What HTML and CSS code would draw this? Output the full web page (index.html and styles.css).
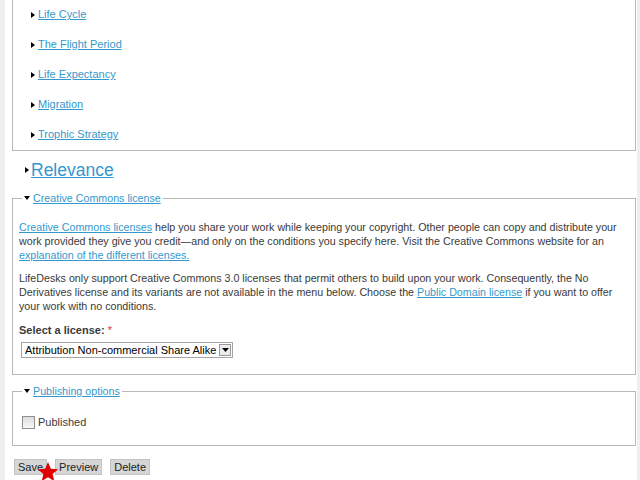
FILE: index.html
```html
<!DOCTYPE html>
<html>
<head>
  <meta charset="UTF-8">
  <title>Edit taxon page</title>
  <link rel="stylesheet" href="styles.css">
</head>
<body>
  <div class="page">
    <fieldset class="chapter-box">
      <ul class="chapter-list">
        <li><a href="#">Life Cycle</a></li>
        <li><a href="#">The Flight Period</a></li>
        <li><a href="#">Life Expectancy</a></li>
        <li><a href="#">Migration</a></li>
        <li><a href="#">Trophic Strategy</a></li>
      </ul>
    </fieldset>

    <h2 class="relevance"><a href="#">Relevance</a></h2>

    <fieldset class="group">
      <legend><span class="open-arrow"></span><a href="#">Creative Commons license</a></legend>
      <p class="first"><a href="#">Creative Commons licenses</a> help you share your work while keeping your copyright. Other people can copy and distribute your work provided they give you credit—and only on the conditions you specify here. Visit the Creative Commons website for an <a href="#">explanation of the different licenses.</a></p>
      <p>LifeDesks only support Creative Commons 3.0 licenses that permit others to build upon your work. Consequently, the No Derivatives license and its variants are not available in the menu below. Choose the <a href="#">Public Domain license</a> if you want to offer your work with no conditions.</p>
      <div class="field-label">Select a license: <span class="required">*</span></div>
      <div class="select-box">
        <span class="select-text">Attribution Non-commercial Share Alike</span>
        <span class="select-btn"><svg width="7" height="4" viewBox="0 0 7 4"><path d="M0 0h7L3.5 4z" fill="#000"/></svg></span>
      </div>
    </fieldset>

    <fieldset class="group publish">
      <legend><span class="open-arrow"></span><a href="#">Publishing options</a></legend>
      <label class="check-row"><input type="checkbox" class="check"> Published</label>
    </fieldset>

    <div class="actions">
      <button class="btn">Save</button>
      <button class="btn">Preview</button>
      <button class="btn">Delete</button>
      <svg class="star" width="22" height="22" viewBox="0 0 24 24">
        <path d="M12 1l3.1 7.4 8 .6-6.1 5.2 1.9 7.8L12 17.8 5.1 22l1.9-7.8L.9 9l8-.6z" fill="#e00000"/>
      </svg>
    </div>
  </div>
</body>
</html>
```

FILE: styles.css
```css
body {
  margin: 0;
  background-color: #efefef;
  font-family: "Liberation Sans", Arial, sans-serif;
  font-size: 10.7px;
  color: #3a3a3a;
  overflow: hidden;
}

a {
  color: #3399cc;
}

.page {
  display: flow-root;
  position: relative;
  margin-left: 5px;
  width: 632px;
  height: 480px;
  padding: 0 1px 0 7px;
  box-sizing: border-box;
  background-color: #fff;
}

fieldset {
  margin: 0;
  border: 1px solid #b8b8b8;
}

/* chapter list, top of it is scrolled away */
.chapter-box {
  margin-top: -20px;
  padding: 18px 0 1px 18px;
}

.chapter-list {
  list-style: none;
  margin: 0;
  padding: 0;
  font-size: 11px;
}

.chapter-list li {
  line-height: 30px;
}

.chapter-list li::before,
.relevance::before {
  content: "";
  display: inline-block;
  border-left: 4px solid #000;
  border-top: 3px solid transparent;
  border-bottom: 3px solid transparent;
  margin-right: 3px;
  vertical-align: 0;
}

.relevance {
  margin: 0;
  padding: 2px 0 4px 13px;
  line-height: 34px;
  font-size: 17.5px;
  font-weight: normal;
}

.relevance::before {
  margin-right: 2px;
  vertical-align: 3px;
}

.group {
  padding: 0 6px 16px 6px;
}

.group legend {
  margin-left: 3px;
  padding: 0 2px;
  line-height: 14px;
}

.open-arrow {
  display: inline-block;
  border-top: 4px solid #000;
  border-left: 3px solid transparent;
  border-right: 3px solid transparent;
  margin-right: 3px;
  vertical-align: 2px;
}

.group p {
  margin: 9px 0 0;
  line-height: 14px;
}

.group p.first {
  margin-top: 15px;
}

.field-label {
  margin-top: 10px;
  line-height: 14px;
  font-weight: bold;
  font-size: 11px;
}

.required {
  color: #d33;
  font-weight: normal;
}

.select-box {
  display: inline-flex;
  align-items: center;
  margin: 5px 0 0 2px;
  height: 16px;
  border: 1px solid #a5a5a5;
  box-sizing: border-box;
  background: #fff;
  color: #000;
  font-size: 11px;
}

.select-text {
  padding: 0 3px 0 3px;
  white-space: nowrap;
}

.select-btn {
  display: flex;
  align-items: center;
  justify-content: center;
  width: 12px;
  height: 12px;
  margin-right: 1px;
  border: 1px solid #999;
  box-sizing: border-box;
  background: #ececec;
}

.publish {
  margin-top: 9px;
}

.check-row {
  display: flex;
  align-items: center;
  margin-top: 17px;
  line-height: 14px;
  font-size: 11px;
}

.check {
  appearance: none;
  width: 13px;
  height: 13px;
  margin: 0 3px 0 3px;
  border: 1px solid #8f8f8f;
  background: linear-gradient(#dcdcdc, #fafafa);
}

.actions {
  position: relative;
  display: flex;
  gap: 8px;
  margin: 13px 0 0 2px;
}

.btn {
  height: 16px;
  padding: 0 3px;
  border: 1px solid #c4c4c4;
  background-color: #d6d6d6;
  font-family: "Liberation Sans", Arial, sans-serif;
  font-size: 11px;
  line-height: 14px;
  color: #222;
}

.star {
  position: absolute;
  left: 23px;
  top: 2px;
}
```
